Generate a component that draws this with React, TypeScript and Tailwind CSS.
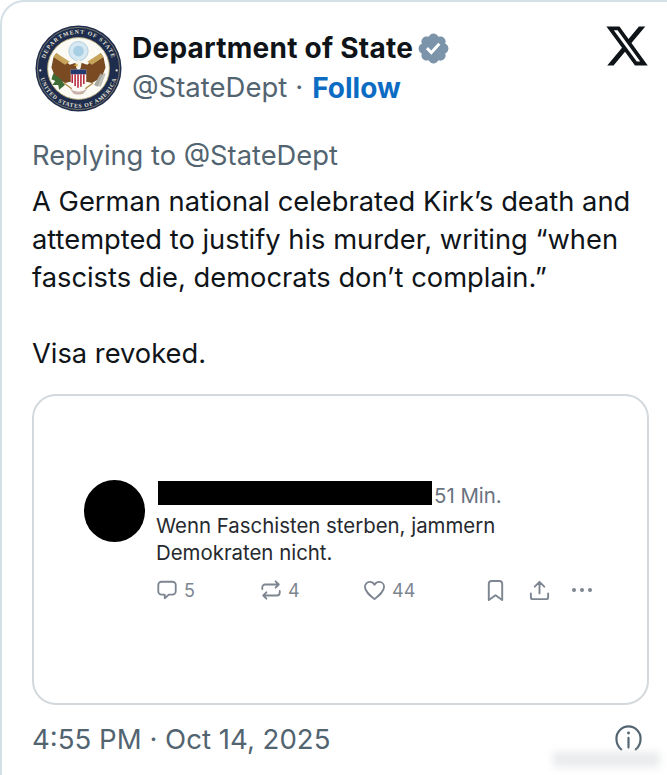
import React from "react";

const Seal = () => (
  <svg viewBox="0 0 90 90" className="w-[87px] h-[87px] shrink-0">
    <circle cx="45" cy="45" r="44.5" fill="#1e2d4d" />
    <circle cx="45" cy="45" r="42.5" fill="none" stroke="#b9ab84" strokeWidth="0.6" />
    <circle cx="45" cy="45" r="32" fill="#fbfaf5" stroke="#b9a873" strokeWidth="0.9" />
    <defs>
      <path id="sealTop" d="M 9 45 A 36 36 0 0 1 81 45" />
      <path id="sealBottom" d="M 4.500 45 A 40.500 40.500 0 0 0 85.500 45" />
    </defs>
    <text fontSize="6" fontWeight="700" fill="#e8e4d6" fontFamily="Liberation Serif, serif" letterSpacing="1.1">
      <textPath href="#sealTop" startOffset="50%" textAnchor="middle">DEPARTMENT OF STATE</textPath>
    </text>
    <text fontSize="6" fontWeight="700" fill="#e8e4d6" fontFamily="Liberation Serif, serif" letterSpacing="0.8">
      <textPath href="#sealBottom" startOffset="50%" textAnchor="middle">UNITED STATES OF AMERICA</textPath>
    </text>
    <circle cx="5.500" cy="47" r="1.200" fill="#e8e4d6" />
    <circle cx="84.500" cy="47" r="1.200" fill="#e8e4d6" />
    <circle cx="45" cy="27" r="10" fill="#d6e8f2" stroke="#a5c4d8" strokeWidth="0.8" />
    <circle cx="45" cy="27" r="5.500" fill="#a9cfe4" />
    <path d="M45 52 L42 39 L36 41 L22 29 L19 34 L17 44 L21 54 L31 60 L40 58 Z" fill="#7a4a22" />
    <path d="M45 52 L48 39 L54 41 L68 29 L71 34 L73 44 L69 54 L59 60 L50 58 Z" fill="#7a4a22" />
    <path d="M22 29 L36 38 L31 41 L19 33 Z" fill="#c6a45a" />
    <path d="M68 29 L54 38 L59 41 L71 33 Z" fill="#c6a45a" />
    <path d="M42 40 C42 35 48 35 48 40 L47 45 L43 45 Z" fill="#f4f1e6" />
    <path d="M44 40 L40 42 L44 43 Z" fill="#d8ab3c" />
    <path d="M37 46 H53 V57 C53 61 48 63 45 65 C42 63 37 61 37 57 Z" fill="#fff" />
    <path d="M37 46 H53 V51 H37 Z" fill="#243a6e" />
    <path d="M38.500 51 V60 M41.500 51 V63 M44.500 51 V65 M47.500 51 V64 M50.500 51 V61" stroke="#b5273a" strokeWidth="1.600" fill="none" />
    <path d="M27 56 L19 50 L17 56 L21 58 L18 62 L24 62 L25 67 L31 62 Z" fill="#3f6b34" />
    <path d="M61 62 L68 50 L70 52 L65 64 Z" fill="#a8a7a0" />
    <path d="M65 63 L71 49 L73 51 L68 64 Z" fill="#c1c0b8" />
    <path d="M36 66 Q45 72 54 66 L50 71 Q45 73 40 71 Z" fill="#c9b0a9" />
    <path d="M30 60 L38 66 M60 60 L52 66" stroke="#b08d45" strokeWidth="1.400" />
  </svg>
);

const Verified = () => (
  <svg viewBox="0 0 22 22" className="w-[35px] h-[35px] shrink-0">
    <path
      fill="#7b94a9"
      d="M20.396 11c-.018-.646-.215-1.275-.57-1.816-.354-.54-.852-.972-1.438-1.246.223-.607.27-1.264.14-1.897-.131-.634-.437-1.218-.882-1.687-.47-.445-1.053-.75-1.687-.882-.633-.13-1.29-.083-1.897.14-.273-.587-.704-1.086-1.245-1.44S11.647 1.62 11 1.604c-.646.017-1.273.213-1.813.568s-.969.854-1.24 1.44c-.608-.223-1.267-.272-1.902-.14-.635.13-1.22.436-1.69.882-.445.47-.749 1.055-.878 1.688-.13.633-.08 1.29.144 1.896-.587.274-1.087.705-1.443 1.245-.356.54-.555 1.17-.574 1.817.02.647.218 1.276.574 1.817.356.54.856.972 1.443 1.245-.224.606-.274 1.263-.144 1.896.13.634.433 1.218.877 1.688.47.443 1.054.747 1.687.878.633.132 1.29.084 1.897-.136.274.586.705 1.084 1.246 1.439.54.354 1.17.551 1.816.569.647-.016 1.276-.213 1.817-.567s.972-.854 1.245-1.44c.604.239 1.266.296 1.903.164.636-.132 1.22-.447 1.68-.907.46-.46.776-1.044.908-1.681s.075-1.299-.165-1.903c.586-.274 1.084-.705 1.439-1.246.354-.54.551-1.17.569-1.816z"
    />
    <path fill="#fff" d="M9.662 14.85l-3.429-3.428 1.293-1.302 2.072 2.072 4.4-4.794 1.347 1.246z" />
  </svg>
);

const XLogo = () => (
  <svg viewBox="0 0 24 24" preserveAspectRatio="none" className="w-[46px] h-[48px] shrink-0 text-[#0f1419]" fill="currentColor">
    <path d="M18.244 2.25h3.308l-7.227 8.26 8.502 11.24H16.17l-5.214-6.817L4.99 21.75H1.68l7.73-8.835L1.254 2.25H8.08l4.713 6.231zm-1.161 17.52h1.833L7.084 4.126H5.117z" />
  </svg>
);

const stroke = "#7c8590";

const Reply = () => (
  <svg viewBox="0 0 24 24" className="w-[22px] h-[22px]" fill="none" stroke={stroke} strokeWidth="2" strokeLinejoin="round" strokeLinecap="round">
    <path d="M6 3h12a3.5 3.5 0 0 1 3.5 3.5v7A3.5 3.5 0 0 1 18 17h-4l-4.5 4v-4H6a3.5 3.5 0 0 1-3.5-3.5v-7A3.5 3.5 0 0 1 6 3z" />
  </svg>
);
const Retweet = () => (
  <svg viewBox="0 0 24 24" className="w-[22px] h-[22px]" fill="none" stroke={stroke} strokeWidth="2" strokeLinejoin="round" strokeLinecap="round">
    <path d="M2.5 11V9a3 3 0 0 1 3-3h15M17 2.5 20.5 6 17 9.500" />
    <path d="M21.5 13v2a3 3 0 0 1-3 3h-15M7 14.5 3.5 18 7 21.500" />
  </svg>
);
const Heart = () => (
  <svg viewBox="0 0 24 24" className="w-[23px] h-[23px]" fill="none" stroke={stroke} strokeWidth="1.9" strokeLinejoin="round">
    <path d="M12 21C7 17 2 13 2 8.2 2 5.2 4.3 3 7 3c2 0 3.8 1 5 3 1.200-2 3-3 5-3 2.700 0 5 2.200 5 5.200C22 13 17 17 12 21z" />
  </svg>
);
const Bookmark = () => (
  <svg viewBox="0 0 24 24" className="w-[23px] h-[23px]" fill="none" stroke={stroke} strokeWidth="2" strokeLinejoin="round">
    <path d="M5 5a3 3 0 0 1 3-3h8a3 3 0 0 1 3 3v17l-7-5-7 5z" />
  </svg>
);
const Share = () => (
  <svg viewBox="0 0 24 24" className="w-[23px] h-[23px]" fill="none" stroke={stroke} strokeWidth="2" strokeLinejoin="round" strokeLinecap="round">
    <path d="M12 15V3M7 8l5-5 5 5M3 15v4a2 2 0 0 0 2 2h14a2 2 0 0 0 2-2v-4" />
  </svg>
);
const More = () => (
  <svg viewBox="0 0 24 24" className="w-[24px] h-[24px]" fill={stroke}>
    <circle cx="4" cy="12" r="2" />
    <circle cx="12" cy="12" r="2" />
    <circle cx="20" cy="12" r="2" />
  </svg>
);

const Info = () => (
  <svg viewBox="0 0 24 24" className="w-[29px] h-[29px] mb-[2px]" fill="none" stroke="#536471" strokeWidth="1.8" strokeLinecap="round">
    <path d="M6 21C3.500 19 2 15.900 2 12 2 6.500 6.500 2 12 2s10 4.500 10 10c0 3.900-1.500 7-4 9" />
    <circle cx="12" cy="7.500" r="1.200" fill="#536471" stroke="none" />
    <path d="M12 11.500v8" />
  </svg>
);

export default function App() {
  return (
    <div className="relative w-[667px] h-[775px] overflow-hidden bg-white font-['Inter','Liberation_Sans',sans-serif]">
      <div className="h-[800px] border-l-2 border-t-2 border-[#d3e0e6] rounded-tl-[24px] pl-[30px] pr-4">
        <div className="flex items-start pt-[23px] pl-[3px]">
          <Seal />
          <div className="ml-[10px] flex-1 pt-[3px]">
            <div className="flex items-center gap-[3px] h-[40px]">
              <span className="text-[28px] font-bold text-[#0f1419] tracking-[0.25px]">Department of State</span>
              <Verified />
            </div>
            <div className="h-[40px] flex items-center text-[27.5px] text-[#536471]">
              <span>@StateDept</span>
              <span className="ml-[8px] mr-[9px]">·</span>
              <span className="text-[28px] font-bold text-[#0c6cc4]">Follow</span>
            </div>
          </div>
          <div className="-mt-[3px] pr-[1px]">
            <XLogo />
          </div>
        </div>
        <p className="mt-[25px] text-[27.3px] leading-[38px] text-[#536471]">Replying to @StateDept</p>
        <p className="mt-[8px] text-[27.3px] leading-[38px] text-[#0f1419]">
          A German national celebrated Kirk’s death and
          <br />
          attempted to justify his murder, writing “when
          <br />
          fascists die, democrats don’t complain.”
          <br />
          <br />
          Visa revoked.
        </p>
        <div className="mt-[21px] h-[311px] w-[617px] border-2 border-[#d3d9dc] rounded-[24px] flex pl-[50px] pt-[84px]">
          <div className="w-[61px] h-[62px] rounded-full bg-black shrink-0" />
          <div className="ml-[13px] flex-1">
            <div className="flex items-center h-[25px]">
              <div className="w-[274px] h-[24px] bg-black" />
              <span className="ml-[2px] mt-[8px] text-[20.4px] text-[#6a7380]">51 Min.</span>
            </div>
            <p className="mt-[7px] -ml-[2px] text-[20.4px] leading-[27px] text-[#26292e]">
              Wenn Faschisten sterben, jammern
              <br />
              Demokraten nicht.
            </p>
            <div className="mt-[12px] -ml-[2px] flex items-center h-[24px] text-[18px] text-[#7c8590]">
              <div className="w-[104px] flex items-center gap-[6px]"><Reply /><span>5</span></div>
              <div className="w-[103px] flex items-center gap-[6px]"><Retweet /><span>4</span></div>
              <div className="w-[121px] flex items-center gap-[6px]"><Heart /><span>44</span></div>
              <div className="w-[44px]"><Bookmark /></div>
              <div className="w-[42px]"><Share /></div>
              <More />
            </div>
          </div>
        </div>
        <div className="mt-[15px] flex items-center justify-between pr-[8px]">
          <span className="text-[27.6px] leading-[38px] text-[#536471]">4:55 PM · Oct 14, 2025</span>
          <Info />
        </div>
      </div>
      <div className="absolute left-[553px] top-[752px] w-[107px] h-[15px] bg-[#d3d6d8] opacity-50 blur-[4px]" />
    </div>
  );
}
